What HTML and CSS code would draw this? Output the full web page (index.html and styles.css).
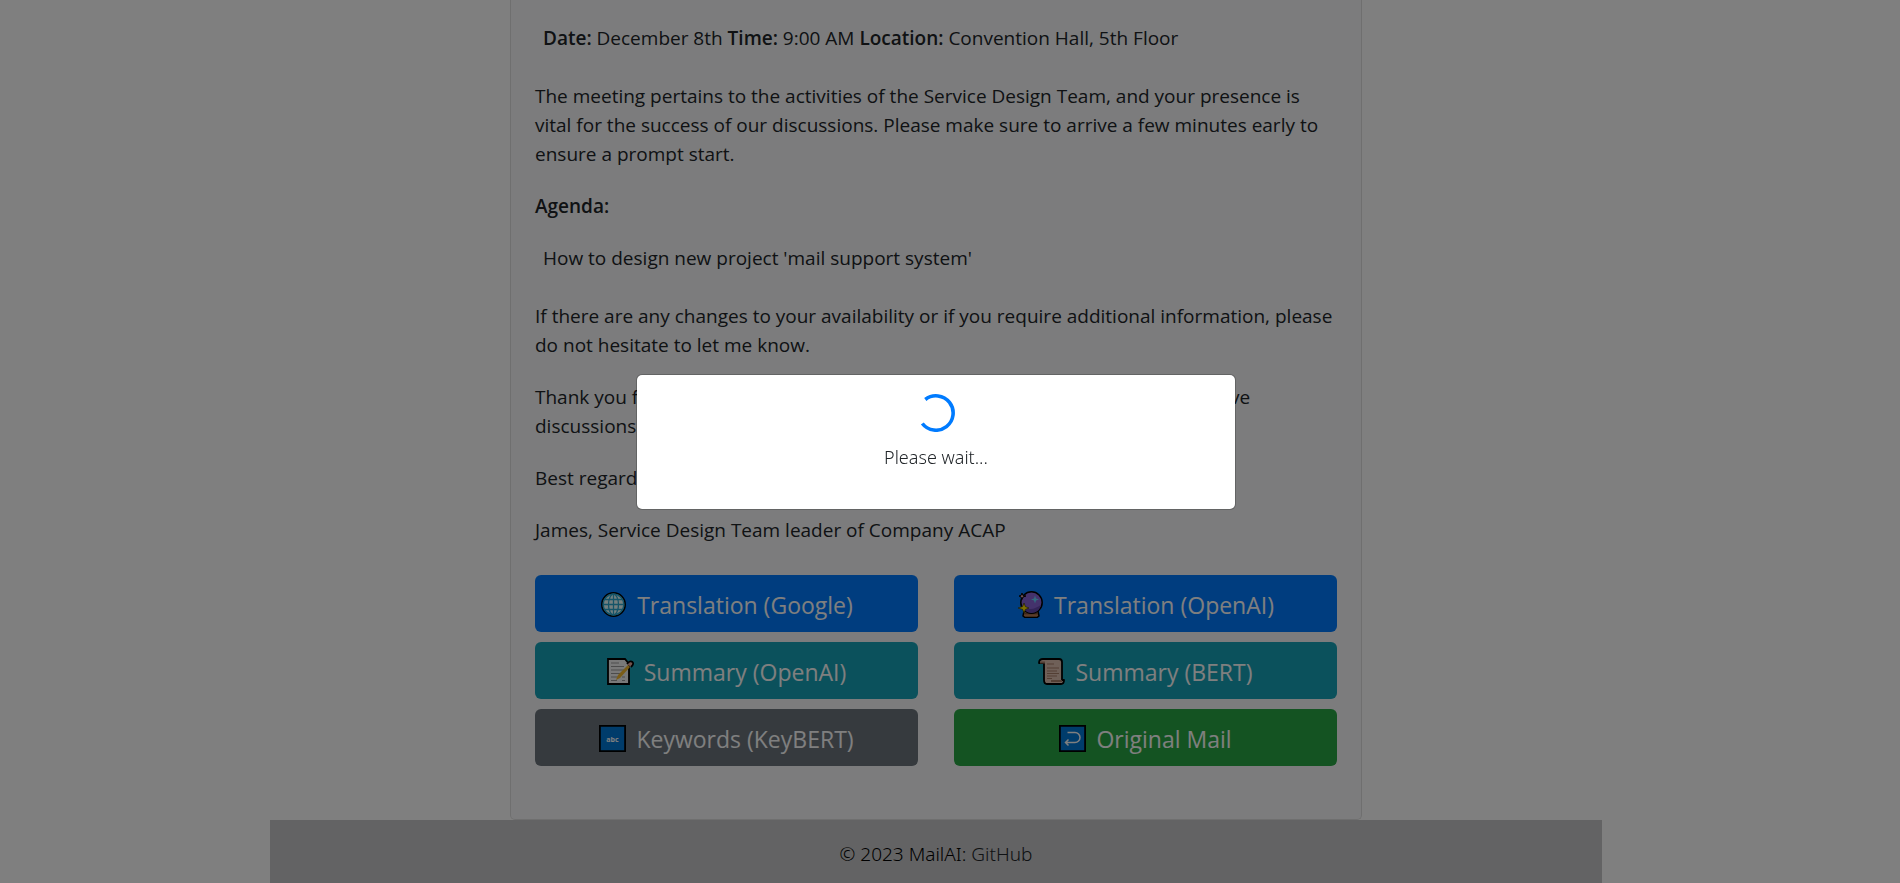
FILE: index.html
```html
<!DOCTYPE html>
<html lang="en">
<head>
<meta charset="utf-8">
<title>MailAI</title>
<link rel="stylesheet" href="styles.css">
</head>
<body>
<div class="page">
  <main class="mail-card">
    <article class="mail-body">
      <p class="detail"><strong>Date:</strong> December 8th <strong>Time:</strong> 9:00 AM <strong>Location:</strong> Convention Hall, 5th Floor</p>
      <p>The meeting pertains to the activities of the Service Design Team, and your presence is<br>vital for the success of our discussions. Please make sure to arrive a few minutes early to<br>ensure a prompt start.</p>
      <p><strong>Agenda:</strong></p>
      <p class="detail">How to design new project 'mail support system'</p>
      <p>If there are any changes to your availability or if you require additional information, please<br>do not hesitate to let me know.</p>
      <p>Thank you for your attention, and I am looking forward to holding our productive<br>discussions.</p>
      <p>Best regards,</p>
      <p>James, Service Design Team leader of Company ACAP</p>
    </article>
    <div class="actions">
      <button type="button" class="btn btn-primary">
        <svg class="icon" viewBox="0 0 27 27" aria-hidden="true"><circle cx="13.500" cy="13.500" r="11.700" fill="#36b5dc" stroke="#000" stroke-width="1.600"/><g fill="none" stroke="#e8ffff" stroke-width="3.600"><circle cx="13.500" cy="13.500" r="8.500"/><path d="M13.500 4v19M4 13.500h19"/></g><circle cx="13.500" cy="13.500" r="7" fill="#e8ffff"/><g fill="none" stroke="#2ba8d0" stroke-width="1.300"><path d="M13.500 3v21M3 13.500h21M5 8.500h17M5 18.500h17"/><ellipse cx="13.500" cy="13.500" rx="5" ry="10.300"/><circle cx="13.500" cy="13.500" r="10.300"/></g></svg>
        Translation (Google)
      </button>
      <button type="button" class="btn btn-primary">
        <svg class="icon" viewBox="0 0 27 27" aria-hidden="true"><path d="M7 20h14l1 5-2 1.500H8L6 25z" fill="#b67b56" stroke="#000" stroke-width="1.500"/><path d="M7 22.500h14" stroke="#7b4b31" stroke-width="1.500"/><circle cx="14.500" cy="11.500" r="10.700" fill="#8864d8" stroke="#000" stroke-width="1.500"/><path d="M5 15c7 5 13 3 19-1-1 5-5 8-9.500 8S6.500 19 5 15z" fill="#6749b0"/><path d="M18 4.500l1 3 3 1-3 1-1 3-1-3-3-1 3-1z" fill="#65d7ff"/><path d="M7 12l1.400 3.600L12 17l-3.600 1.400L7 22l-1.400-3.600L1 17l4.600-1.400z" fill="#ffe000" stroke="#332a00" stroke-width=".6"/><path d="M5 2l1 2.500L9 5 6 6 5 8.500 4 6 2 5l2-.5z" fill="#e2a7b0" stroke="#000" stroke-width="1"/></svg>
        Translation (OpenAI)
      </button>
      <button type="button" class="btn btn-info">
        <svg class="icon" viewBox="0 0 27 27" aria-hidden="true"><path d="M1 1h17l4 5v20H1z" fill="#f2f2f2" stroke="#000" stroke-width="1.800"/><path d="M4 5h8M4 8.500h13M4 12h13M4 15.500h10M4 19h7M4 22.500h6m5 0h3m-3-3.500h3" stroke="#999" stroke-width="1.200"/><path d="M20 6q3-4 5.500-2 1.800 2-1.500 5" fill="#e2a59b" stroke="#000" stroke-width="1.700"/><path d="M9 22l2-5L21 7l2 2-10 11z" fill="#f4b92e"/></svg>
        Summary (OpenAI)
      </button>
      <button type="button" class="btn btn-info">
        <svg class="icon" viewBox="0 0 27 27" aria-hidden="true"><path d="M1 5q0-4 4-4h16q3 0 3 3v18h2q0 4-3 4H9q-3 0-3-4V5z" fill="#dfc1b1" stroke="#000" stroke-width="1.800" stroke-linejoin="round"/><path d="M2 4.500h5M13 23h11" stroke="#a77e68" stroke-width="2"/><path d="M9 6h7M9 10h12M9 13h10M9 15.500h12M9 18h10M9 20.500h5" stroke="#a77e68" stroke-width="1.200"/></svg>
        Summary (BERT)
      </button>
      <button type="button" class="btn btn-secondary">
        <svg class="icon" viewBox="0 0 27 27" aria-hidden="true"><path d="M.9.900h25.200v25.200H.9z" fill="#0078d7" stroke="#000" stroke-width="1.800"/><text class="icon-text" x="13.500" y="16.500" text-anchor="middle">abc</text></svg>
        Keywords (KeyBERT)
      </button>
      <button type="button" class="btn btn-success">
        <svg class="icon" viewBox="0 0 27 27" aria-hidden="true"><path d="M.9.900h25.200v25.200H.9z" fill="#0078d7" stroke="#000" stroke-width="1.800"/><path d="M8.500 7.500H16a5 5 0 0 1 0 10H7M9.500 14.500l-3 3 3 3" fill="none" stroke="#fff" stroke-width="1.500"/></svg>
        Original Mail
      </button>
    </div>
  </main>
  <footer class="footer">© 2023 MailAI: <a href="#">GitHub</a></footer>
</div>
<div class="overlay">
  <div class="modal" role="dialog" aria-modal="true" aria-label="Loading">
    <svg class="spinner" viewBox="0 0 38 38" aria-hidden="true"><path d="M8.300 5.500A17.200 17.200 0 1 1 5.300 29.500" fill="none" stroke="#007bff" stroke-width="3.600"/></svg>
    <p class="wait">Please wait...</p>
  </div>
</div>
</body>
</html>
```
FILE: styles.css
```css
* {
  box-sizing: border-box;
}

body {
  margin: 0;
  min-height: 100vh;
  padding-right: 28px;
  background: #fff;
  color: #212529;
  font-family: "Open Sans", "Noto Sans", sans-serif;
  font-size: 19px;
  line-height: 29px;
  overflow: hidden;
}

.page {
  width: 100%;
  max-width: 1332px;
  margin: 0 auto;
}

.mail-card {
  max-width: 852px;
  margin: 0 auto;
  padding: 24px 24px 53px;
  border: 1px solid #dfdfdf;
  border-top: 0;
  border-radius: 0 0 5px 5px;
  background: #f8f9fa;
}

.mail-body p {
  margin: 0 0 23px;
}

.mail-body .detail {
  margin-bottom: 29px;
  padding-left: 8px;
}

.mail-body strong {
  font-weight: 600;
}

.actions {
  display: grid;
  grid-template-columns: 1fr 1fr;
  gap: 10px 36px;
  padding-top: 7px;
}

.btn {
  display: flex;
  align-items: center;
  justify-content: center;
  gap: 10px;
  height: 57px;
  padding: 2px 16px 0;
  border: 0;
  border-radius: 6px;
  color: #fff;
  font-family: inherit;
  font-size: 23px;
  line-height: 36px;
}

.btn-primary {
  background: #007bff;
}

.btn-info {
  background: #17a2b8;
}

.btn-secondary {
  background: #6c757d;
}

.btn-success {
  background: #28a745;
}

.icon {
  flex: none;
  width: 27px;
  height: 27px;
}

.icon-text {
  fill: #fff;
  font-size: 7px;
  font-weight: 700;
}

.footer {
  padding: 20px;
  background: #c7c7c8;
  color: #000;
  font-family: "Noto Sans", "Open Sans", sans-serif;
  font-weight: 300;
  text-align: center;
}

.footer a {
  color: #212529;
  text-decoration: none;
}

.overlay {
  position: fixed;
  inset: 0;
  display: flex;
  align-items: center;
  justify-content: center;
  padding-right: 28px;
  background: rgba(0, 0, 0, 0.5);
}

.modal {
  width: 600px;
  padding: 19px;
  border: 1px solid rgba(0, 0, 0, 0.2);
  border-radius: 6px;
  background: #fff;
  background-clip: padding-box;
  font-family: "Noto Sans", "Open Sans", sans-serif;
  font-size: 18px;
  font-weight: 300;
  text-align: center;
}

.spinner {
  display: block;
  width: 38px;
  height: 38px;
  margin: 0 auto 11px;
}

.wait {
  margin: 0 0 18px;
}
```
